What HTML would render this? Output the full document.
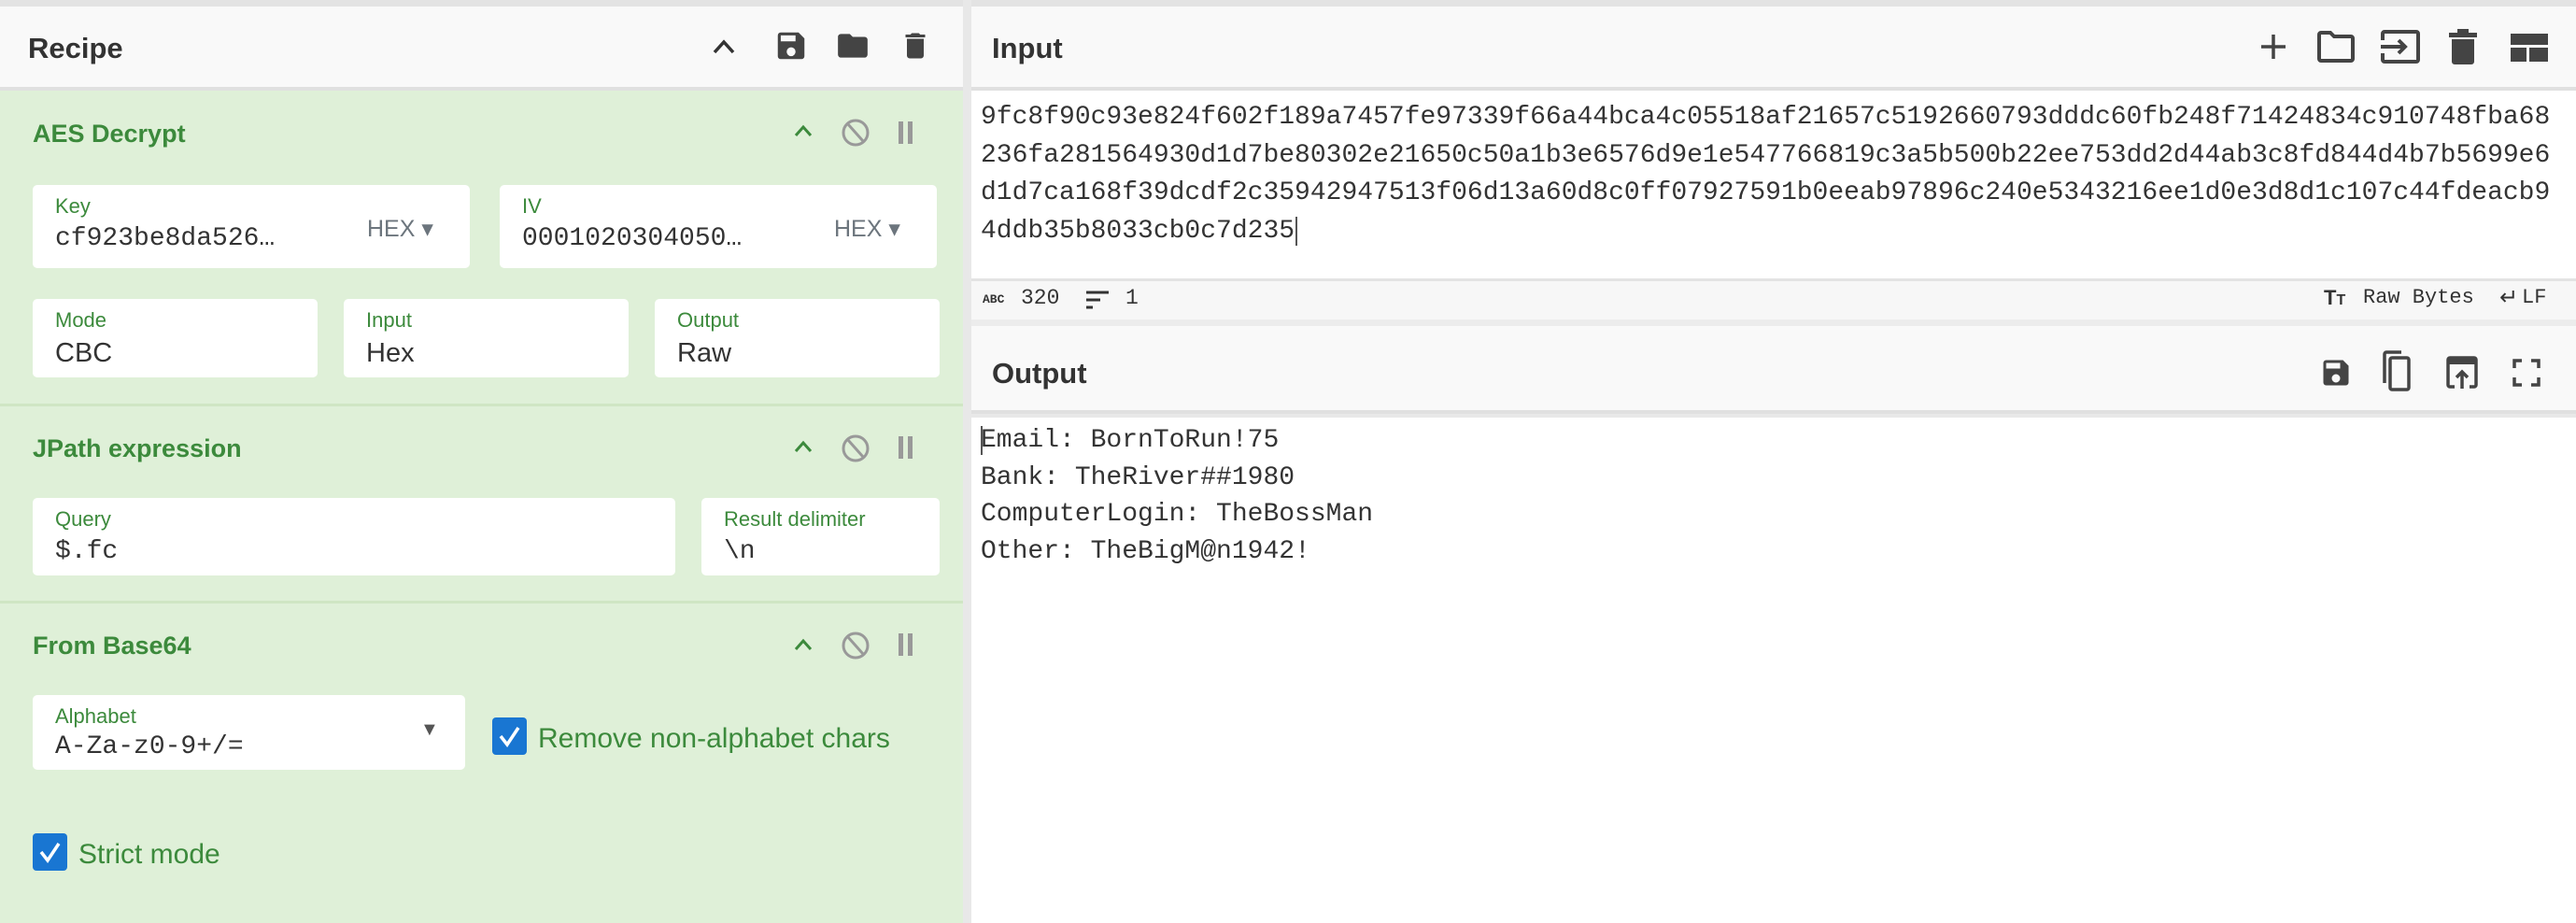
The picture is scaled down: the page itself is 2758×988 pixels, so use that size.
<!DOCTYPE html>
<html><head><meta charset="utf-8"><style>
*{box-sizing:border-box;margin:0;padding:0}
body{width:2758px;height:988px;overflow:hidden;background:#e8e8e8;font-family:"Liberation Sans",sans-serif;position:relative}
.abs{position:absolute}
.hdr{background:#f9f9f9;border-top:7px solid #e3e3e3;border-bottom:4px solid #e0e0e0}
.htitle{font-weight:bold;font-size:31px;color:#333}
.green{background:#dff0d8}
.stitle{font-weight:bold;font-size:27px;color:#3c8a3c}
.box{background:#fff;border-radius:5px}
.lbl{position:absolute;left:24px;top:10px;font-size:22px;color:#3c8a3c}
.val{position:absolute;left:24px;top:42px;font-size:29px;color:#333}
.mono{font-family:"Liberation Mono",monospace}
.sep{height:3px;background:#cfe6c4}
.chk{width:37px;height:40px;background:#1976d2;border-radius:4px}
.ctext{font-size:30px;color:#3c8a3c}
.txt{font-family:"Liberation Mono",monospace;font-size:28px;color:#333;line-height:40.5px;white-space:nowrap}
</style></head><body>
<!-- Left panel -->
<div class="abs hdr" style="left:0;top:0;width:1031px;height:97px"></div>
<div class="abs htitle" style="left:30px;top:34px">Recipe</div>
<svg class="abs" style="left:760px;top:38px" width="30" height="24" viewBox="0 0 30 24"><path d="M5 18 L15 7 L25 18" stroke="#333" stroke-width="3.5" fill="none"/></svg>
<svg class="abs" style="left:828px;top:30px" width="38" height="38" viewBox="0 0 24 24"><path fill="#444" d="M17 3H5a2 2 0 0 0-2 2v14a2 2 0 0 0 2 2h14a2 2 0 0 0 2-2V7l-4-4zm-5 16a3 3 0 1 1 0-6 3 3 0 0 1 0 6zm3-10H5V5h10v4z"/></svg>
<svg class="abs" style="left:893px;top:30px" width="40" height="38" viewBox="0 0 24 24"><path fill="#444" d="M10 4H4a2 2 0 0 0-2 2v12a2 2 0 0 0 2 2h16a2 2 0 0 0 2-2V8a2 2 0 0 0-2-2h-8l-2-2z"/></svg>
<svg class="abs" style="left:962px;top:30px" width="36" height="38" viewBox="0 0 24 24"><path fill="#444" d="M6 19a2 2 0 0 0 2 2h8a2 2 0 0 0 2-2V7H6v12zM19 4h-3.5l-1-1h-5l-1 1H5v2h14V4z"/></svg>

<div class="abs green" style="left:0;top:97px;width:1031px;height:891px"></div>
<!-- AES -->
<div class="abs stitle" style="left:35px;top:128px">AES Decrypt</div>
<svg class="abs" style="left:848px;top:130px" width="24" height="20" viewBox="0 0 24 20"><path d="M4 15 L12 6 L20 15" stroke="#3c8a3c" stroke-width="3" fill="none"/></svg>
<svg class="abs" style="left:900px;top:126px" width="32" height="32" viewBox="0 0 32 32"><circle cx="16" cy="16" r="13" stroke="#999" stroke-width="3" fill="none"/><path d="M8 7 L24 25" stroke="#999" stroke-width="3"/></svg>
<div class="abs" style="left:962px;top:130px;width:5px;height:24px;background:#999"></div>
<div class="abs" style="left:972px;top:130px;width:5px;height:24px;background:#999"></div>

<div class="abs box" style="left:35px;top:198px;width:468px;height:89px"><div class="lbl">Key</div><div class="val mono" style="font-size:28px">cf923be8da526…</div><div class="abs" style="left:358px;top:32px;font-size:25px;color:#6c757d">HEX ▾</div></div>
<div class="abs box" style="left:535px;top:198px;width:468px;height:89px"><div class="lbl">IV</div><div class="val mono" style="font-size:28px">0001020304050…</div><div class="abs" style="left:358px;top:32px;font-size:25px;color:#6c757d">HEX ▾</div></div>

<div class="abs box" style="left:35px;top:320px;width:305px;height:84px"><div class="lbl">Mode</div><div class="val">CBC</div></div>
<div class="abs box" style="left:368px;top:320px;width:305px;height:84px"><div class="lbl">Input</div><div class="val">Hex</div></div>
<div class="abs box" style="left:701px;top:320px;width:305px;height:84px"><div class="lbl">Output</div><div class="val">Raw</div></div>
<div class="abs sep" style="left:0;top:432px;width:1031px"></div>
<!-- JPath -->
<div class="abs stitle" style="left:35px;top:465px">JPath expression</div>
<svg class="abs" style="left:848px;top:468px" width="24" height="20" viewBox="0 0 24 20"><path d="M4 15 L12 6 L20 15" stroke="#3c8a3c" stroke-width="3" fill="none"/></svg>
<svg class="abs" style="left:900px;top:464px" width="32" height="32" viewBox="0 0 32 32"><circle cx="16" cy="16" r="13" stroke="#999" stroke-width="3" fill="none"/><path d="M8 7 L24 25" stroke="#999" stroke-width="3"/></svg>
<div class="abs" style="left:962px;top:467px;width:5px;height:24px;background:#999"></div>
<div class="abs" style="left:972px;top:467px;width:5px;height:24px;background:#999"></div>
<div class="abs box" style="left:35px;top:533px;width:688px;height:83px"><div class="lbl">Query</div><div class="val mono" style="font-size:28px">$.fc</div></div>
<div class="abs box" style="left:751px;top:533px;width:255px;height:83px"><div class="lbl">Result delimiter</div><div class="val mono" style="font-size:28px">\n</div></div>
<div class="abs sep" style="left:0;top:643px;width:1031px"></div>
<!-- Base64 -->
<div class="abs stitle" style="left:35px;top:676px">From Base64</div>
<svg class="abs" style="left:848px;top:680px" width="24" height="20" viewBox="0 0 24 20"><path d="M4 15 L12 6 L20 15" stroke="#3c8a3c" stroke-width="3" fill="none"/></svg>
<svg class="abs" style="left:900px;top:675px" width="32" height="32" viewBox="0 0 32 32"><circle cx="16" cy="16" r="13" stroke="#999" stroke-width="3" fill="none"/><path d="M8 7 L24 25" stroke="#999" stroke-width="3"/></svg>
<div class="abs" style="left:962px;top:678px;width:5px;height:24px;background:#999"></div>
<div class="abs" style="left:972px;top:678px;width:5px;height:24px;background:#999"></div>
<div class="abs box" style="left:35px;top:744px;width:463px;height:80px"><div class="lbl">Alphabet</div><div class="val mono" style="font-size:28px;top:40px">A-Za-z0-9+/=</div><div class="abs" style="left:415px;top:26px;font-size:20px;color:#555">▼</div></div>
<div class="abs chk" style="left:527px;top:768px"><svg width="37" height="40" viewBox="0 0 37 40"><path d="M9 20 L16 29 L28 11" stroke="#fff" stroke-width="3.5" fill="none"/></svg></div>
<div class="abs ctext" style="left:576px;top:774px">Remove non-alphabet chars</div>
<div class="abs chk" style="left:35px;top:892px"><svg width="37" height="40" viewBox="0 0 37 40"><path d="M9 20 L16 29 L28 11" stroke="#fff" stroke-width="3.5" fill="none"/></svg></div>
<div class="abs ctext" style="left:84px;top:898px">Strict mode</div>

<!-- Right panel -->
<div class="abs hdr" style="left:1040px;top:0;width:1718px;height:97px"></div>
<div class="abs htitle" style="left:1062px;top:34px">Input</div>
<svg class="abs" style="left:2418px;top:34px" width="32" height="32" viewBox="0 0 32 32"><path d="M16 3V29M3 16H29" stroke="#444" stroke-width="3.5"/></svg>
<svg class="abs" style="left:2480px;top:32px" width="42" height="36" viewBox="0 0 42 36"><path d="M3 5a2 2 0 0 1 2-2h10l4 4h18a2 2 0 0 1 2 2v22a2 2 0 0 1-2 2H5a2 2 0 0 1-2-2z" stroke="#444" stroke-width="4" fill="none"/></svg>
<svg class="abs" style="left:2547px;top:31px" width="46" height="38" viewBox="0 0 46 38"><path d="M4 12V5a2 2 0 0 1 2-2h34a2 2 0 0 1 2 2v28a2 2 0 0 1-2 2H6a2 2 0 0 1-2-2v-7" stroke="#444" stroke-width="4" fill="none"/><path d="M2 19H28M21 12l7 7-7 7" stroke="#444" stroke-width="4" fill="none"/></svg>
<svg class="abs" style="left:2622px;top:31px" width="30" height="38" viewBox="0 0 30 38"><path fill="#444" d="M0 4h30v5H0zM9 0h12v4H9zM3 11h24v24a3 3 0 0 1-3 3H6a3 3 0 0 1-3-3z"/></svg>
<svg class="abs" style="left:2688px;top:36px" width="40" height="30" viewBox="0 0 40 30"><path fill="#444" d="M0 0h40v12H0zM0 15h17v15H0zM20 15h20v15H20z"/></svg>

<div class="abs" style="left:1040px;top:97px;width:1718px;height:201px;background:#fff"></div>
<div class="abs txt" style="left:1050px;top:106px">9fc8f90c93e824f602f189a7457fe97339f66a44bca4c05518af21657c5192660793dddc60fb248f71424834c910748fba68<br>236fa281564930d1d7be80302e21650c50a1b3e6576d9e1e547766819c3a5b500b22ee753dd2d44ab3c8fd844d4b7b5699e6<br>d1d7ca168f39dcdf2c35942947513f06d13a60d8c0ff07927591b0eeab97896c240e5343216ee1d0e3d8d1c107c44fdeacb9<br>4ddb35b8033cb0c7d235<span style="border-left:2px solid #555;margin-left:1px"></span></div>
<div class="abs" style="left:1040px;top:298px;width:1718px;height:44px;background:#f7f7f7;border-top:3px solid #e3e3e3"></div>
<div class="abs mono" style="left:1052px;top:313px;font-size:13px;font-weight:bold;color:#333">ABC</div>
<div class="abs mono" style="left:1093px;top:306px;font-size:23px;color:#333">320</div>
<svg class="abs" style="left:1162px;top:310px" width="26" height="22" viewBox="0 0 26 22"><path d="M1 3H25M1 11H16M1 19H8" stroke="#333" stroke-width="3"/></svg>
<div class="abs mono" style="left:1205px;top:306px;font-size:23px;color:#333">1</div>
<div class="abs" style="left:2488px;top:306px;font-size:22px;font-weight:bold;color:#333">T<span style="font-size:16px">T</span></div>
<div class="abs mono" style="left:2530px;top:306px;font-size:22px;color:#333">Raw Bytes</div>
<div class="abs" style="left:2676px;top:304px;font-size:24px;color:#333">↵</div>
<div class="abs mono" style="left:2700px;top:306px;font-size:22px;color:#333">LF</div>
<div class="abs" style="left:1040px;top:342px;width:1718px;height:8px;background:#ececec"></div>
<div class="abs" style="left:1040px;top:349px;width:1718px;height:94px;background:#f9f9f9;border-bottom:4px solid #e0e0e0"></div>
<div class="abs htitle" style="left:1062px;top:382px">Output</div>
<svg class="abs" style="left:2483px;top:380px" width="36" height="38" viewBox="0 0 24 24"><path fill="#444" d="M17 3H5a2 2 0 0 0-2 2v14a2 2 0 0 0 2 2h14a2 2 0 0 0 2-2V7l-4-4zm-5 16a3 3 0 1 1 0-6 3 3 0 0 1 0 6zm3-10H5V5h10v4z"/></svg>
<svg class="abs" style="left:2550px;top:374px" width="32" height="46" viewBox="0 0 32 46"><path d="M3 36V5a2 2 0 0 1 2-2h16" stroke="#444" stroke-width="3.5" fill="none"/><rect x="9" y="9" width="20" height="34" rx="2" stroke="#444" stroke-width="3.5" fill="none"/></svg>
<svg class="abs" style="left:2618px;top:380px" width="36" height="38" viewBox="0 0 36 38"><path d="M10 34H5a2 2 0 0 1-2-2V5a2 2 0 0 1 2-2h26a2 2 0 0 1 2 2v27a2 2 0 0 1-2 2h-5" stroke="#444" stroke-width="3.5" fill="none"/><rect x="3" y="3" width="30" height="7" fill="#444"/><path d="M18 36V18M12 24l6-6 6 6" stroke="#444" stroke-width="3.5" fill="none"/></svg>
<svg class="abs" style="left:2690px;top:384px" width="30" height="30" viewBox="0 0 30 30"><path d="M2 10V2h8M20 2h8v8M28 20v8h-8M10 28H2v-8" stroke="#444" stroke-width="3.5" fill="none"/></svg>
<div class="abs" style="left:1040px;top:447px;width:1718px;height:541px;background:#fff"></div>
<div class="abs txt" style="left:1050px;top:452px;line-height:39.5px"><span style="border-left:2px solid #555;margin-right:-2px"></span>Email: BornToRun!75<br>Bank: TheRiver##1980<br>ComputerLogin: TheBossMan<br>Other: TheBigM@n1942!</div>
</body></html>
